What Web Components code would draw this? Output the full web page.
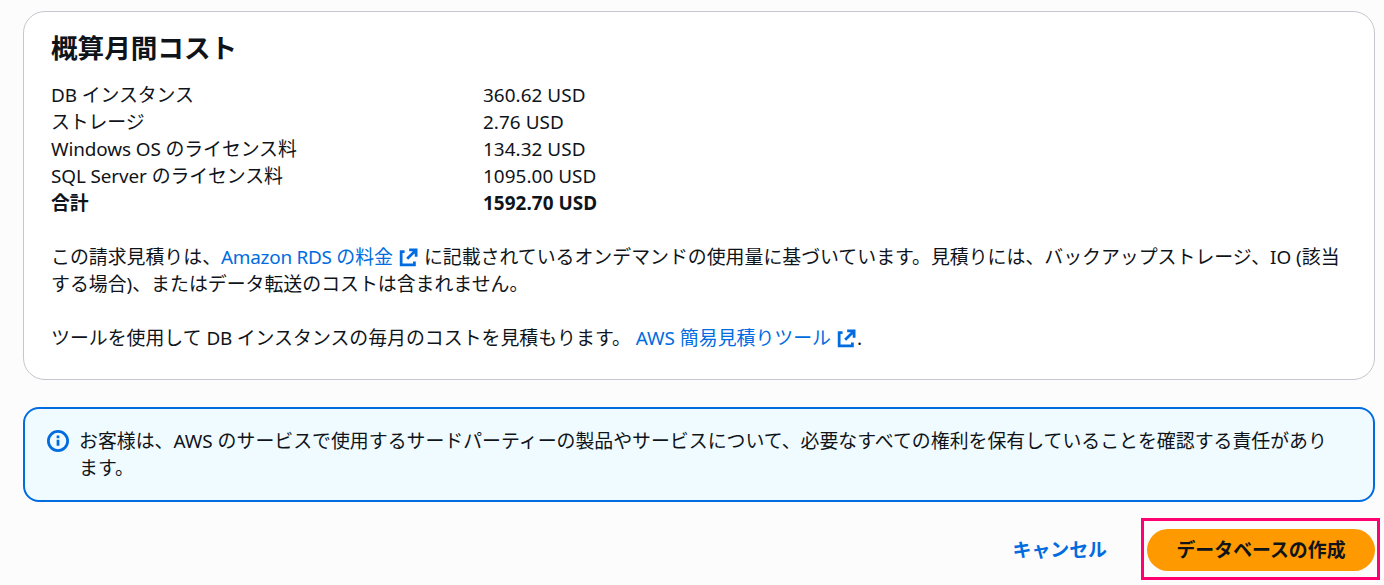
<!DOCTYPE html>
<html lang="ja">
<head>
<meta charset="utf-8">
<title>概算月間コスト</title>
<style>
  body {
    margin: 0;
    width: 1384px;
    height: 585px;
    overflow: hidden;
    background: #fcfcfd;
    color: #0f141a;
    font: 18.9px/27px "Noto Sans", "Noto Sans CJK JP", sans-serif;
    --link: #006ce0;
  }
</style>
</head>
<body>
<cost-page></cost-page>

<script>
/**
 * White rounded container with a heading slot.
 */
customElements.define('cost-card',
  class extends HTMLElement {
    constructor () {
      super()
      this.attachShadow({ mode: 'open' }).innerHTML = `
        <style>
          :host {
            display: block;
            box-sizing: border-box;
            height: 369px;
            padding: 19px 27px 0;
            border: 1px solid #c6c6cd;
            border-radius: 22px;
            background: #fff;
          }
          h2 {
            margin: 0 0 17px;
            font-size: 26.6px;
            line-height: 34px;
            font-weight: 700;
          }
        </style>
        <h2><slot name="heading"></slot></h2>
        <slot></slot>
      `
    }
  }
)

/**
 * One line of the estimate: a label and its amount.
 */
customElements.define('cost-row',
  class extends HTMLElement {
    constructor () {
      super()
      this.attachShadow({ mode: 'open' }).innerHTML = `
        <style>
          :host {
            display: grid;
            grid-template-columns: 432px 1fr;
            height: 27px;
          }
          :host([total]) {
            font-weight: 700;
          }
          .label {
            letter-spacing: -0.1px;
          }
          .amount {
            letter-spacing: 0.05px;
          }
        </style>
        <span class="label"><slot></slot></span>
        <span class="amount"><slot name="amount"></slot></span>
      `
    }
  }
)

customElements.define('external-link',
  class extends HTMLElement {
    constructor () {
      super()
      this.attachShadow({ mode: 'open' }).innerHTML = `<style>
          :host {
            display: inline;
            color: var(--link);
          }
          svg {
            width: 21px;
            height: 21px;
            margin-left: 5px;
            vertical-align: -4px;
            fill: none;
            stroke: currentColor;
            stroke-width: 2.1;
          }
        </style><slot></slot><svg viewBox="0 0 16 16">
          <path d="M8.5 2.2h5.3v5.3M13.4 2.6 7 9"/>
          <path d="M5 3.5H2.4v10.1h10.1V11"/>
        </svg>`
    }
  }
)

/**
 * Blue information message.
 */
customElements.define('info-alert',
  class extends HTMLElement {
    constructor () {
      super()
      this.attachShadow({ mode: 'open' }).innerHTML = `
        <style>
          :host {
            display: flex;
            gap: 10px;
            box-sizing: border-box;
            height: 95px;
            padding: 19px 22px;
            border: 2px solid var(--link);
            border-radius: 16px;
            background: #f0fbff;
          }
          svg {
            flex: none;
            width: 22px;
            height: 22px;
            margin-top: 2px;
            fill: none;
            stroke: var(--link);
            stroke-width: 2;
          }
        </style>
        <svg viewBox="0 0 16 16">
          <circle cx="8" cy="8" r="7"/>
          <path d="M8 11.5V7M8 6V4"/>
        </svg>
        <div><slot></slot></div>
      `
    }
  }
)

/**
 * Button, link style or primary.
 */
customElements.define('page-button',
  class extends HTMLElement {
    constructor () {
      super()
      this.attachShadow({ mode: 'open' }).innerHTML = `
        <style>
          :host {
            display: block;
            position: relative;
          }
          button {
            display: block;
            height: 42px;
            padding: 0 29px;
            border: 0;
            border-radius: 21px;
            background: none;
            color: var(--link);
            font: inherit;
            font-weight: 700;
            white-space: nowrap;
          }
          :host([primary]) button {
            width: 228px;
            background: #ff9900;
            color: #0f141a;
          }
          :host([marked])::after {
            content: "";
            position: absolute;
            inset: -11px -5px -9px -6px;
            border: 3px solid #ff0073;
          }
        </style>
        <button type="button"><slot></slot></button>
      `
    }
  }
)

customElements.define('cost-page',
  class extends HTMLElement {
    constructor () {
      super()
      this.attachShadow({ mode: 'open' }).innerHTML = `
        <style>
          :host {
            display: block;
            padding: 11px 9px 0 23px;
          }
          p {
            margin: 27px 0 0;
          }
          .latin {
            letter-spacing: -0.25px;
          }
          info-alert {
            margin-top: 27px;
          }
          .actions {
            display: flex;
            justify-content: flex-end;
            gap: 11px;
            margin-top: 27px;
          }
        </style>
        <cost-card>
          <span slot="heading">概算月間コスト</span>
          <cost-row>DB インスタンス<span slot="amount">360.62 USD</span></cost-row>
          <cost-row>ストレージ<span slot="amount">2.76 USD</span></cost-row>
          <cost-row>Windows OS のライセンス料<span slot="amount">134.32 USD</span></cost-row>
          <cost-row>SQL Server のライセンス料<span slot="amount">1095.00 USD</span></cost-row>
          <cost-row total>合計<span slot="amount">1592.70 USD</span></cost-row>
          <p>この請求見積りは、<external-link><span class="latin">Amazon RDS </span>の料金</external-link> に記載されているオンデマンドの使用量に基づいています。見積りには、バックアップストレージ、IO (該当<br>する場合)、またはデータ転送のコストは含まれません。</p>
          <p>ツールを使用して <span class="latin">DB </span>インスタンスの毎月のコストを見積もります。 <external-link>AWS 簡易見積りツール</external-link>.</p>
        </cost-card>
        <info-alert>お客様は、AWS のサービスで使用するサードパーティーの製品やサービスについて、必要なすべての権利を保有していることを確認する責任があり<br>ます。</info-alert>
        <div class="actions">
          <page-button>キャンセル</page-button>
          <page-button primary marked>データベースの作成</page-button>
        </div>
      `
    }
  }
)
</script>
</body>
</html>
